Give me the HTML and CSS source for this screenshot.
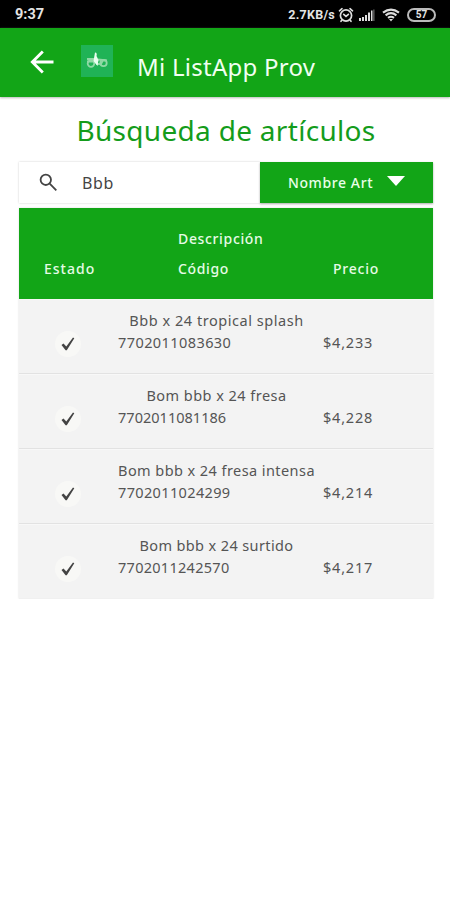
FILE: index.html
```html
<!DOCTYPE html>
<html lang="es">
<head>
<meta charset="utf-8">
<title>Mi ListApp Prov</title>
<link rel="stylesheet" href="styles.css">
</head>
<body>
<div class="status">
  <span class="time">9:37</span>
  <span class="speed">2.7KB/s</span>
  <svg class="alarm" width="16" height="16" viewBox="0 0 16 16" fill="none" stroke="#ddd" stroke-width="1.7" stroke-linecap="round"><circle cx="8" cy="8.5" r="5.6"/><path d="M1.5 3.8 4 1.7M14.5 3.8 12 1.7M5.7 7.3 8 9.3l2.4-2M3.800 13.200 3 14.300M12.200 13.200l.800 1.100"/></svg>
  <svg class="signal" width="18" height="14" viewBox="0 0 18 14" fill="#ddd"><path d="M1 10h2v3H1zM4 9h2v4H4zM7 7h2v6H7zM10 4.500h2V13h-2z"/><path d="M13 2.500h1.500V13H13z"/><path fill="#666" d="M15.200 1.500h1.300V13h-1.300z"/></svg>
  <svg class="wifi" width="18" height="14" viewBox="0 0 18 14" fill="none" stroke="#ddd" stroke-width="2.100"><path d="M1 4.700Q9-1.500 17 4.700M3.600 7.400Q9 3 14.400 7.400M6 9.900Q9 7.600 12 9.900"/><path d="m7 11 2 2.500 2-2.500z" fill="#ddd" stroke="none"/></svg>
  <span class="battery">57</span>
</div>
<header class="appbar">
  <svg class="back" width="24" height="24" viewBox="0 0 24 24" fill="none" stroke="#fff" stroke-width="2.800"><path d="M23.500 12H2M12.800 1.500 2.300 12l10.500 10.500"/></svg>
  <svg class="logo" width="32" height="32" viewBox="0 0 32 32"><path fill="#20b356" d="M0 0h32v32H0z"/><g fill="none" stroke="#8fd9a5" stroke-width="1.800"><circle cx="10" cy="18.500" r="3.300"/><circle cx="22.500" cy="18" r="3.200"/><path d="M6 14h7l3 5h4l2-4M6 16.500h7M17 14.500l9 1"/></g><path fill="#e9fff0" d="M14 7.500c2 0 2 2 1.500 3.500l2 4-1 6-4-5z"/></svg>
  <h1>Mi ListApp Prov</h1>
</header>
<main>
  <h2>Búsqueda de artículos</h2>
  <div class="search">
    <div class="field">
      <svg width="19" height="19" viewBox="0 0 19 19" fill="none" stroke="#444" stroke-width="1.800"><circle cx="6.800" cy="6.800" r="5.200"/><path d="m10.700 10.700 6.600 6.600"/></svg>
      <span>Bbb</span>
    </div>
    <div class="select"><span>Nombre Art</span><svg width="18" height="10" viewBox="0 0 18 10"><path fill="#fff" d="M0 0h18L9 10z"/></svg></div>
  </div>
  <section class="table">
    <div class="head">
      <span class="h-state">Estado</span>
      <div class="h-item"><span class="h-desc">Descripción</span><span class="h-code">Código</span></div>
      <span class="h-price">Precio</span>
    </div>
    <div class="row">
      <span class="check"><svg width="14" height="14" viewBox="0 0 14 14"><path d="M.500 8 2.500 6.500l2.800 3L12 .500l1.300.800L5.800 13.300H4.600z"/></svg></span>
      <div class="item"><span class="name n1">Bbb x 24 tropical splash</span><span class="code c1">7702011083630</span></div>
      <span class="price">$4,233</span>
    </div>
    <div class="row">
      <span class="check"><svg width="14" height="14" viewBox="0 0 14 14"><path d="M.500 8 2.500 6.500l2.800 3L12 .500l1.300.800L5.800 13.300H4.600z"/></svg></span>
      <div class="item"><span class="name n2">Bom bbb x 24 fresa</span><span class="code c2">7702011081186</span></div>
      <span class="price">$4,228</span>
    </div>
    <div class="row">
      <span class="check"><svg width="14" height="14" viewBox="0 0 14 14"><path d="M.500 8 2.500 6.500l2.800 3L12 .500l1.300.800L5.800 13.300H4.600z"/></svg></span>
      <div class="item"><span class="name n3">Bom bbb x 24 fresa intensa</span><span class="code c3">7702011024299</span></div>
      <span class="price">$4,214</span>
    </div>
    <div class="row">
      <span class="check"><svg width="14" height="14" viewBox="0 0 14 14"><path d="M.500 8 2.500 6.500l2.800 3L12 .500l1.300.800L5.800 13.300H4.600z"/></svg></span>
      <div class="item"><span class="name n4">Bom bbb x 24 surtido</span><span class="code c4">7702011242570</span></div>
      <span class="price">$4,217</span>
    </div>
  </section>
</main>
</body>
</html>
```
FILE: styles.css
```css
* { box-sizing: border-box; }
body { margin: 0; background: #fff; font-family: "Noto Sans", sans-serif; color: #555; }
span, h1, h2 { white-space: nowrap; }
svg { display: block; flex: none; }

.status { height: 28px; background: #000; display: flex; align-items: center; padding: 1px 14px 0 15px; color: #e4e4e4; font-family: Roboto, sans-serif; font-weight: 700; }
.time { font-size: 14.5px; }
.speed { margin-left: auto; font-size: 12.5px; letter-spacing: .25px; }
.alarm { margin-left: 3px; }
.signal { margin-left: 4px; }
.wifi { margin-left: 6px; }
.battery { width: 29px; height: 14px; margin-left: 7px; border: 2px solid #bbb; border-radius: 7px; font-size: 10px; line-height: 10px; text-align: center; }

.appbar { height: 69px; background: #12a517; display: flex; color: #f1fff1; box-shadow: 0 1px 2px #bbb; padding-left: 30px; }
.back { margin-top: 22px; }
.logo { margin: 17px 0 0 27px; }
h1 { margin: 23px 0 0 24px; font-size: 24px; line-height: 32px; font-weight: 400; letter-spacing: .26px; }

main { padding: 0 17px 0 19px; }
h2 { margin: 13px 0 0; height: 52px; font-size: 28px; line-height: 40px; font-weight: 400; color: #149c1b; text-align: center; letter-spacing: .3px; }
.search { display: flex; height: 41px; }
.field { width: 241px; display: flex; align-items: center; padding-left: 20px; gap: 24px; font-size: 16px; letter-spacing: .6px; color: #444; box-shadow: 0 0 2px #ccc; }
.select { flex: 1; background: #12a517; color: #e9ffe9; display: flex; align-items: center; padding: 0 28px; justify-content: space-between; font-size: 14px; font-weight: 500; letter-spacing: .6px; box-shadow: 0 1px 2px #aaa; }
.select svg { margin-top: -4px; }
.table { margin-top: 5px; box-shadow: 0 0 2px #ddd; }
.head, .row { display: grid; grid-template-columns: 99px 197px 1fr; }
.head { height: 91px; background: #12a517; color: #e6fbe6; font-size: 14px; line-height: 20px; font-weight: 500; letter-spacing: .65px; }
.h-state { margin: 51px 0 0 25px; letter-spacing: 1px; }
.h-item { display: flex; flex-direction: column; padding: 21px 0 0 60px; gap: 10px; }
.h-price { margin: 51px 0 0 18px; letter-spacing: .8px; }
.row { height: 75px; background: #f3f3f3; border-bottom: 1px solid #e2e2e2; box-shadow: inset 0 1px #f8f8f8; font-size: 14.5px; line-height: 22px; letter-spacing: .5px; }
.row:last-child { border-bottom-color: #f0f0f0; }
.check { width: 26px; height: 26px; margin: 32px 0 0 36px; border-radius: 50%; background: #f8f8f6; display: grid; place-items: center; }
.check svg { fill: #444; }
.item { display: flex; flex-direction: column; padding-top: 10px; }
.name { align-self: center; }
.n1 { letter-spacing: .54px; }
.n2 { letter-spacing: .46px; }
.n3 { letter-spacing: .43px; }
.n4 { letter-spacing: .38px; }
.c1 { letter-spacing: .42px; }
.c2 { letter-spacing: .02px; }
.c3 { letter-spacing: .36px; }
.c4 { letter-spacing: .28px; }
.price { margin: 32px 0 0 8px; letter-spacing: .8px; }
```
